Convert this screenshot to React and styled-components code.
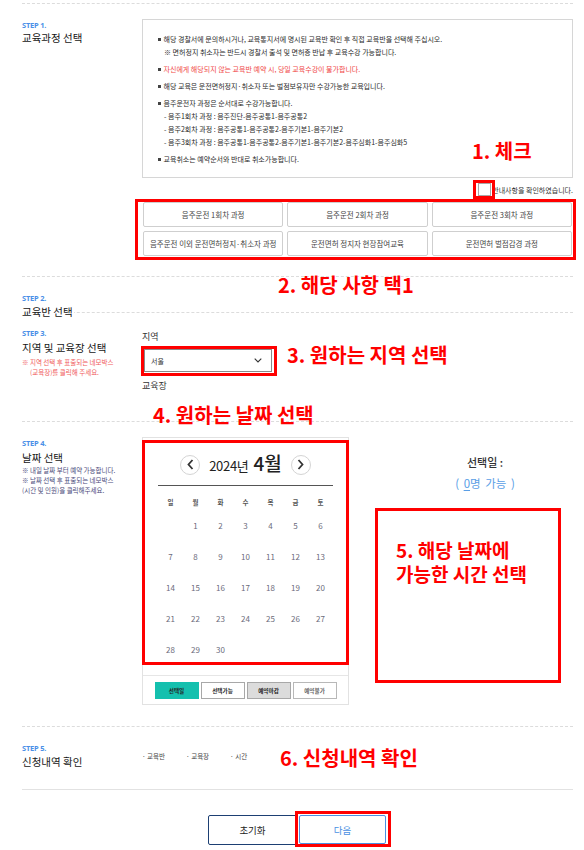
import React from "react";
import styled, { createGlobalStyle } from "styled-components";

const GlobalStyle = createGlobalStyle`
  html, body { margin: 0; padding: 0; background: #fff; }
  body { font-family: "Noto Sans CJK KR", "Noto Sans", sans-serif; color: #333; }
  * { box-sizing: border-box; }
`;

const Page = styled.div`
  width: 584px;
  padding: 3px 11px 0 22px;
`;

const Section = styled.section`
  position: relative;
  display: grid;
  grid-template-columns: 120px 1fr;
  align-items: start;
  border-bottom: 1px ${(p) => (p.$solid ? "solid #e2e2e2" : "dashed #dcdcdc")};
  ${(p) => (p.$first ? "border-top: 1px dashed #dcdcdc;" : "")}
  padding: ${(p) => p.$pad};
  ${(p) => (p.$height ? `height: ${p.$height}px;` : "")}
`;

const StepHead = styled.div`
  padding-top: ${(p) => p.$top || 0}px;
`;

const StepNo = styled.div`
  font-family: "Noto Sans", "Liberation Sans", sans-serif;
  font-size: 7.5px;
  line-height: 8px;
  font-weight: 700;
  color: #4a8fe7;
  letter-spacing: -0.2px;
`;

const StepTitle = styled.div`
  width: fit-content;
  position: relative;
  z-index: 1;
  background: #fff;
  padding-right: 1px;
  font-size: 10.5px;
  line-height: 14px;
  color: #151515;
  margin-top: ${(p) => p.$mt || 3}px;
`;

const StepNote = styled.div`
  font-size: 6.5px;
  line-height: 10px;
  color: ${(p) => p.$color};
  padding-left: ${(p) => (p.$indent ? 8 : 0)}px;
`;

const Annotation = styled.div`
  position: absolute;
  left: ${(p) => p.$x}px;
  top: ${(p) => p.$y}px;
  font-size: 20px;
  line-height: 20px;
  font-weight: 700;
  color: #ff0000;
  white-space: nowrap;
  z-index: 2;
`;

/* STEP 1 */
const Notice = styled.div`
  border: 1px solid #d6d6d6;
  padding: 13px 12px 11px 15px;
`;

const NoticeGroup = styled.div`
  & + & { margin-top: 4px; }
`;

const NoticeLine = styled.div`
  font-size: 7px;
  line-height: 13px;
  white-space: nowrap;
  color: ${(p) => (p.$red ? "#f04848" : "#2a2a2a")};
  padding-left: ${(p) => (p.$sub ? 6 : 0)}px;
  display: flex;
  align-items: center;
  ${(p) =>
    p.$bullet
      ? `&::before { content: ""; width: 2.5px; height: 2.5px; background: #444; margin-right: 3px; flex: none; }`
      : ""}
`;

const CheckRow = styled.div`
  margin-top: 2px;
  height: 19px;
  display: flex;
  justify-content: flex-end;
  align-items: center;
`;

const CheckBox = styled.span`
  position: relative;
  width: 13px;
  height: 13px;
  border: 1px solid #a8a8a8;
  background: #fff;
  margin-right: 1px;
  &::after {
    content: "";
    position: absolute;
    left: -6px;
    right: -5px;
    top: -4px;
    bottom: -4px;
    border: 3px solid #ff0000;
  }
`;

const CheckText = styled.span`
  font-size: 7px;
  line-height: 10px;
  color: #333;
`;

const RedFrame = styled.div`
  border: 3px solid #ff0000;
  padding: ${(p) => p.$pad || 0};
  margin: ${(p) => p.$margin || 0};
`;

const CourseGrid = styled.div`
  display: grid;
  grid-template-columns: repeat(3, 1fr);
  grid-auto-rows: 25px;
  gap: 4px;
`;

const CourseButton = styled.div`
  border: 1px solid #cfcfcf;
  border-radius: 2px;
  display: flex;
  align-items: center;
  justify-content: center;
  font-size: 7.5px;
  color: #444;
  white-space: nowrap;
`;

/* STEP 3 */
const FieldLabel = styled.div`
  font-size: 9px;
  line-height: 12px;
  color: #333;
  margin-top: ${(p) => p.$mt || 0}px;
`;

const Select = styled.div`
  height: 23px;
  width: 128px;
  border: 1px solid #8a8a8a;
  display: flex;
  align-items: center;
  justify-content: space-between;
  padding: 0 9px 0 6px;
  font-size: 7px;
  color: #333;
`;

/* STEP 4 */
const DateRow = styled.div`
  display: flex;
  align-items: flex-start;
`;

const CalendarBox = styled.div`
  width: 207px;
  border: 1px solid #e2e2e2;
`;

const CalHeader = styled.div`
  width: 175px;
  margin: 0 auto;
  padding: 8px 0 7px;
  border-bottom: 1px solid #555;
  display: flex;
  justify-content: center;
  align-items: center;
  gap: 9px;
`;

const CircleBtn = styled.span`
  width: 20px;
  height: 20px;
  border-radius: 50%;
  border: 1px solid #d4d4d4;
  display: flex;
  align-items: center;
  justify-content: center;
`;

const MonthTitle = styled.div`
  display: flex;
  align-items: baseline;
  gap: 5px;
  color: #222;
  line-height: 24px;
`;

const YearText = styled.span`
  font-size: 13px;
  letter-spacing: -0.3px;
`;

const MonthText = styled.span`
  font-size: 19px;
  font-weight: 500;
`;

const DayGrid = styled.div`
  width: 175px;
  margin: ${(p) => p.$mt || 0}px auto ${(p) => p.$mb || 0}px;
  display: grid;
  grid-template-columns: repeat(7, 25px);
  grid-auto-rows: ${(p) => p.$row}px;
`;

const WeekDay = styled.div`
  display: flex;
  align-items: center;
  justify-content: center;
  font-size: 6.5px;
  font-weight: 700;
  color: #555;
`;

const DayCell = styled.div`
  display: flex;
  align-items: center;
  justify-content: center;
  font-size: 8px;
  color: #6b6b7b;
`;

const Legend = styled.div`
  margin-top: 10px;
  border-top: 1px solid #e6e6e6;
  padding: 6px 0 5px;
  display: flex;
  justify-content: center;
  gap: 2px;
`;

const LegendItem = styled.span`
  width: 44px;
  height: 17px;
  display: flex;
  align-items: center;
  justify-content: center;
  font-size: 5.6px;
  font-weight: 700;
  background: ${(p) => p.$bg};
  border: 1px solid ${(p) => p.$border};
  color: ${(p) => p.$color || "#222"};
`;

const InfoPanel = styled.div`
  flex: 1;
`;

const InfoText = styled.div`
  margin-top: 14.5px;
  padding-left: 48px;
  text-align: center;
  font-size: 11px;
  font-weight: 500;
  line-height: 21px;
  color: #333;
`;

const InfoBlue = styled.div`
  color: #5a9ee6;
  font-weight: 400;
  font-size: 11.5px;
  word-spacing: 2px;
  & u { text-underline-offset: 2px; }
`;

const TimeBox = styled.div`
  margin: 14.5px 0 0 26px;
  width: 186px;
  height: 175px;
  border: 3px solid #ff0000;
  padding: 27px 0 0 18px;
  font-size: 19px;
  line-height: 24px;
  font-weight: 700;
  color: #ff0000;
`;

/* STEP 5 */
const SummaryRow = styled.div`
  margin-top: ${(p) => p.$mt || 0}px;
  display: flex;
  gap: 21px;
  font-size: 6.5px;
  line-height: 10px;
  color: #444;
`;

const ButtonRow = styled.div`
  display: flex;
  justify-content: center;
  align-items: flex-start;
  padding: 21px 0 0 4px;
`;

const ActionButton = styled.div`
  width: ${(p) => p.$w}px;
  height: ${(p) => p.$h}px;
  margin-top: ${(p) => p.$mt || 0}px;
  border: 1px solid ${(p) => p.$border};
  border-radius: 2px;
  display: flex;
  align-items: center;
  justify-content: center;
  font-size: 9.5px;
  color: ${(p) => p.$color};
  background: #fff;
`;

const Chevron = ({ dir }) => (
  <svg width="7" height="11" viewBox="0 0 7 11">
    <path
      d={dir === "left" ? "M5.5 1 L1.5 5.5 L5.5 10" : "M1.5 1 L5.5 5.5 L1.5 10"}
      fill="none"
      stroke="#333"
      strokeWidth="1.8"
    />
  </svg>
);

const courses = [
  "음주운전 1회차 과정",
  "음주운전 2회차 과정",
  "음주운전 3회차 과정",
  "음주운전 이외 운전면허정지·취소자 과정",
  "운전면허 정지자 현장참여교육",
  "운전면허 벌점감경 과정",
];

const weekDays = ["일", "월", "화", "수", "목", "금", "토"];
const days = [null, ...Array.from({ length: 30 }, (_, i) => i + 1)];

export default function App() {
  return (
    <>
      <GlobalStyle />
      <Page>
        <Section $first $pad="15px 0 16px 0">
          <StepHead $top={2}>
            <StepNo>STEP 1.</StepNo>
            <StepTitle $mt={2}>교육과정 선택</StepTitle>
          </StepHead>
          <div>
            <Notice>
              <NoticeGroup>
                <NoticeLine $bullet>
                  해당 경찰서에 문의하시거나, 교육통지서에 명시된 교육반 확인 후 직접 교육반을 선택해 주십시오.
                </NoticeLine>
                <NoticeLine $sub>
                  ※ 면허정지 취소자는 반드시 경찰서 출석 및 면허증 반납 후 교육수강 가능합니다.
                </NoticeLine>
              </NoticeGroup>
              <NoticeGroup>
                <NoticeLine $bullet $red>
                  자신에게 해당되지 않는 교육반 예약 시, 당일 교육수강이 불가합니다.
                </NoticeLine>
              </NoticeGroup>
              <NoticeGroup>
                <NoticeLine $bullet>
                  해당 교육은 운전면허정지·취소자 또는 벌점보유자만 수강가능한 교육입니다.
                </NoticeLine>
              </NoticeGroup>
              <NoticeGroup>
                <NoticeLine $bullet>음주운전자 과정은 순서대로 수강가능합니다.</NoticeLine>
                <NoticeLine $sub>- 음주1회차 과정 : 음주진단-음주공통1-음주공통2</NoticeLine>
                <NoticeLine $sub>- 음주2회차 과정 : 음주공통1-음주공통2-음주기본1-음주기본2</NoticeLine>
                <NoticeLine $sub>
                  - 음주3회차 과정 : 음주공통1-음주공통2-음주기본1-음주기본2-음주심화1-음주심화5
                </NoticeLine>
              </NoticeGroup>
              <NoticeGroup>
                <NoticeLine $bullet>교육취소는 예약순서와 반대로 취소가능합니다.</NoticeLine>
              </NoticeGroup>
            </Notice>
            <CheckRow>
              <CheckBox />
              <CheckText>안내사항을 확인하였습니다.</CheckText>
            </CheckRow>
            <RedFrame $margin="0 -3px 0 -7px" $pad="0 1px 1px 5px">
              <CourseGrid>
                {courses.map((c) => (
                  <CourseButton key={c}>{c}</CourseButton>
                ))}
              </CourseGrid>
            </RedFrame>
          </div>
          <Annotation $x={450} $y={137}>1. 체크</Annotation>
          <Annotation $x={256} $y={271}>2. 해당 사항 택1</Annotation>
        </Section>

        <Section $pad="17px 0 0 0" $height={36}>
          <StepHead>
            <StepNo>STEP 2.</StepNo>
            <StepTitle>교육반 선택</StepTitle>
          </StepHead>
        </Section>

        <Section $pad="16px 0 29px 0">
          <StepHead>
            <StepNo>STEP 3.</StepNo>
            <StepTitle $mt={4}>지역 및 교육장 선택</StepTitle>
            <div style={{ marginTop: 2 }}>
              <StepNote $color="#f05a5a">※ 지역 선택 후 표출되는 네모박스</StepNote>
              <StepNote $color="#f05a5a" $indent>(교육장)를 클릭해 주세요.</StepNote>
            </div>
          </StepHead>
          <div>
            <FieldLabel $mt={2}>지역</FieldLabel>
            <RedFrame $margin="3px 0 0 -1px" $pad="0 2px 1px 0" style={{ width: 136 }}>
              <Select>
                <span>서울</span>
                <svg width="8" height="5" viewBox="0 0 8 5">
                  <path d="M0.7 0.7 L4 4 L7.3 0.7" fill="none" stroke="#333" strokeWidth="1.1" />
                </svg>
              </Select>
            </RedFrame>
            <FieldLabel $mt={4}>교육장</FieldLabel>
          </div>
          <Annotation $x={265} $y={32}>3. 원하는 지역 선택</Annotation>
        </Section>

        <Section $pad="15px 0 21px 0">
          <StepHead $top={2}>
            <StepNo>STEP 4.</StepNo>
            <StepTitle $mt={3.5}>날짜 선택</StepTitle>
            <div style={{ marginTop: 0.5 }}>
              <StepNote $color="#4a4a7a">※ 내일 날짜 부터 예약 가능합니다.</StepNote>
              <StepNote $color="#4a4a7a">※ 날짜 선택 후 표출되는 네모박스</StepNote>
              <StepNote $color="#4a4a7a">(시간 및 인원)을 클릭해주세요.</StepNote>
            </div>
          </StepHead>
          <DateRow>
            <CalendarBox>
              <RedFrame $margin="2px -1px 0">
                <CalHeader>
                  <CircleBtn>
                    <Chevron dir="left" />
                  </CircleBtn>
                  <MonthTitle>
                    <YearText>2024년</YearText>
                    <MonthText>4월</MonthText>
                  </MonthTitle>
                  <CircleBtn>
                    <Chevron dir="right" />
                  </CircleBtn>
                </CalHeader>
                <DayGrid $row={16} $mt={8}>
                  {weekDays.map((d) => (
                    <WeekDay key={d}>{d}</WeekDay>
                  ))}
                </DayGrid>
                <DayGrid $row={31} $mb={-3}>
                  {days.map((d, i) => (
                    <DayCell key={i}>{d}</DayCell>
                  ))}
                </DayGrid>
              </RedFrame>
              <Legend>
                <LegendItem $bg="#14c0ae" $border="#14c0ae">선택일</LegendItem>
                <LegendItem $bg="#fff" $border="#a8a8a8">선택가능</LegendItem>
                <LegendItem $bg="#dcdcdc" $border="#a8a8a8">예약마감</LegendItem>
                <LegendItem $bg="#fff" $border="#b8b8b8" $color="#666">예약불가</LegendItem>
              </Legend>
            </CalendarBox>
            <InfoPanel>
              <InfoText>
                <div>선택일 :</div>
                <InfoBlue>
                  ( <u>0</u>명 가능 )
                </InfoBlue>
              </InfoText>
              <TimeBox>
                5. 해당 날짜에
                <br />
                가능한 시간 선택
              </TimeBox>
            </InfoPanel>
          </DateRow>
          <Annotation $x={131} $y={-17}>4. 원하는 날짜 선택</Annotation>
        </Section>

        <Section $solid $pad="17px 0 20px 0">
          <StepHead>
            <StepNo>STEP 5.</StepNo>
            <StepTitle>신청내역 확인</StepTitle>
          </StepHead>
          <SummaryRow $mt={7}>
            <span>· 교육반</span>
            <span>· 교육장</span>
            <span>· 시간</span>
          </SummaryRow>
          <Annotation $x={258} $y={21}>6. 신청내역 확인</Annotation>
        </Section>

        <ButtonRow>
          <ActionButton $w={89} $h={30} $mt={4} $border="#1d3f73" $color="#222">
            초기화
          </ActionButton>
          <RedFrame $margin="0 0 0 -2px" $pad="1px 2px 0 1px">
            <ActionButton $w={87} $h={29} $border="#4a90e2" $color="#4a90e2">
              다음
            </ActionButton>
          </RedFrame>
        </ButtonRow>
      </Page>
    </>
  );
}
